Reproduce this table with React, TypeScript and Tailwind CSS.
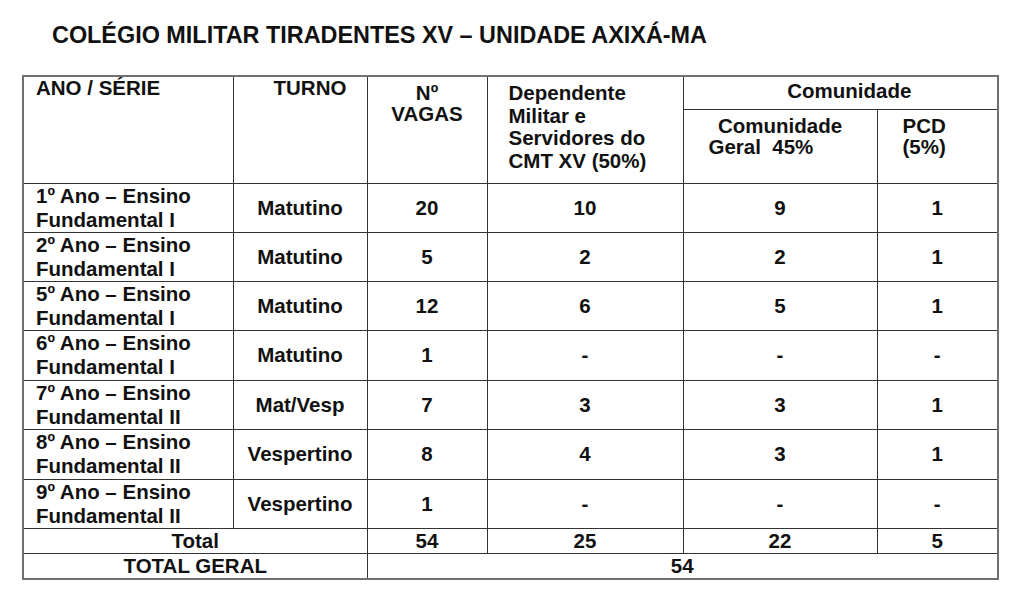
const rows = [
  { ano: '1º Ano – Ensino', fund: 'Fundamental I', turno: 'Matutino', vagas: '20', dep: '10', com: '9', pcd: '1', h: 'h-[49px]' },
  { ano: '2º Ano – Ensino', fund: 'Fundamental I', turno: 'Matutino', vagas: '5', dep: '2', com: '2', pcd: '1', h: 'h-[49px]' },
  { ano: '5º Ano – Ensino', fund: 'Fundamental I', turno: 'Matutino', vagas: '12', dep: '6', com: '5', pcd: '1', h: 'h-[49px]' },
  { ano: '6º Ano – Ensino', fund: 'Fundamental I', turno: 'Matutino', vagas: '1', dep: '-', com: '-', pcd: '-', h: 'h-[50px]' },
  { ano: '7º Ano – Ensino', fund: 'Fundamental II', turno: 'Mat/Vesp', vagas: '7', dep: '3', com: '3', pcd: '1', h: 'h-[49px]' },
  { ano: '8º Ano – Ensino', fund: 'Fundamental II', turno: 'Vespertino', vagas: '8', dep: '4', com: '3', pcd: '1', h: 'h-[50px]' },
  { ano: '9º Ano – Ensino', fund: 'Fundamental II', turno: 'Vespertino', vagas: '1', dep: '-', com: '-', pcd: '-', h: 'h-[49px]' },
];

const cell = 'border border-[#333] p-0';

export default function App() {
  return (
    <div className="min-h-[598px] w-[1024px] bg-white pt-[21px] font-['Liberation_Sans',Arial,sans-serif] font-bold text-[#111]">
      <h1 className="pl-[52px] text-[23.4px] leading-[28px] font-bold">
        COLÉGIO MILITAR TIRADENTES XV – UNIDADE AXIXÁ-MA
      </h1>

      <table className="mt-[26px] ml-[22px] w-[975px] table-fixed border-collapse border-2 border-[#707070] text-[20.5px]">
        <colgroup>
          <col className="w-[210px]" />
          <col className="w-[134px]" />
          <col className="w-[120px]" />
          <col className="w-[196px]" />
          <col className="w-[194px]" />
          <col className="w-[121px]" />
        </colgroup>
        <thead>
          <tr className="h-[33px]">
            <th rowSpan={2} className={`${cell} pl-[12px] text-left align-top leading-[22px] font-bold`}>
              ANO / SÉRIE
            </th>
            <th rowSpan={2} className={`${cell} pl-[40px] text-left align-top leading-[22px] font-bold`}>
              TURNO
            </th>
            <th rowSpan={2} className={`${cell} pt-[5px] text-center align-top leading-[21px] font-bold`}>
              Nº
              <br />
              VAGAS
            </th>
            <th rowSpan={2} className={`${cell} pl-[21px] pt-[5px] text-left align-top leading-[22.5px] font-bold`}>
              Dependente
              <br />
              Militar e
              <br />
              Servidores do
              <br />
              CMT XV (50%)
            </th>
            <th colSpan={2} className={`${cell} pl-[18px] pt-[3px] text-center align-top leading-[22px] font-bold`}>
              Comunidade
            </th>
          </tr>
          <tr className="h-[74px]">
            <th className={`${cell} pt-[5px] align-top leading-[21px] font-bold`}>
              <div className="text-center">Comunidade</div>
              <div className="whitespace-pre pl-[25px] text-left">Geral  45%</div>
            </th>
            <th className={`${cell} pl-[25px] pt-[5px] text-left align-top leading-[21px] font-bold`}>
              PCD
              <br />
              (5%)
            </th>
          </tr>
        </thead>
        <tbody className="leading-[24px]">
          {rows.map((r) => (
            <tr key={r.ano} className={r.h}>
              <td className={`${cell} pl-[12px] align-middle`}>
                {r.ano}
                <br />
                {r.fund}
              </td>
              <td className={`${cell} text-center align-middle`}>{r.turno}</td>
              <td className={`${cell} text-center align-middle`}>{r.vagas}</td>
              <td className={`${cell} text-center align-middle`}>{r.dep}</td>
              <td className={`${cell} text-center align-middle`}>{r.com}</td>
              <td className={`${cell} text-center align-middle`}>{r.pcd}</td>
            </tr>
          ))}
          <tr className="h-[25px]">
            <td colSpan={2} className={`${cell} text-center align-middle`}>Total</td>
            <td className={`${cell} text-center align-middle`}>54</td>
            <td className={`${cell} text-center align-middle`}>25</td>
            <td className={`${cell} text-center align-middle`}>22</td>
            <td className={`${cell} text-center align-middle`}>5</td>
          </tr>
          <tr className="h-[24px]">
            <td colSpan={2} className={`${cell} text-center align-middle`}>TOTAL GERAL</td>
            <td colSpan={4} className={`${cell} text-center align-middle`}>54</td>
          </tr>
        </tbody>
      </table>
    </div>
  );
}
